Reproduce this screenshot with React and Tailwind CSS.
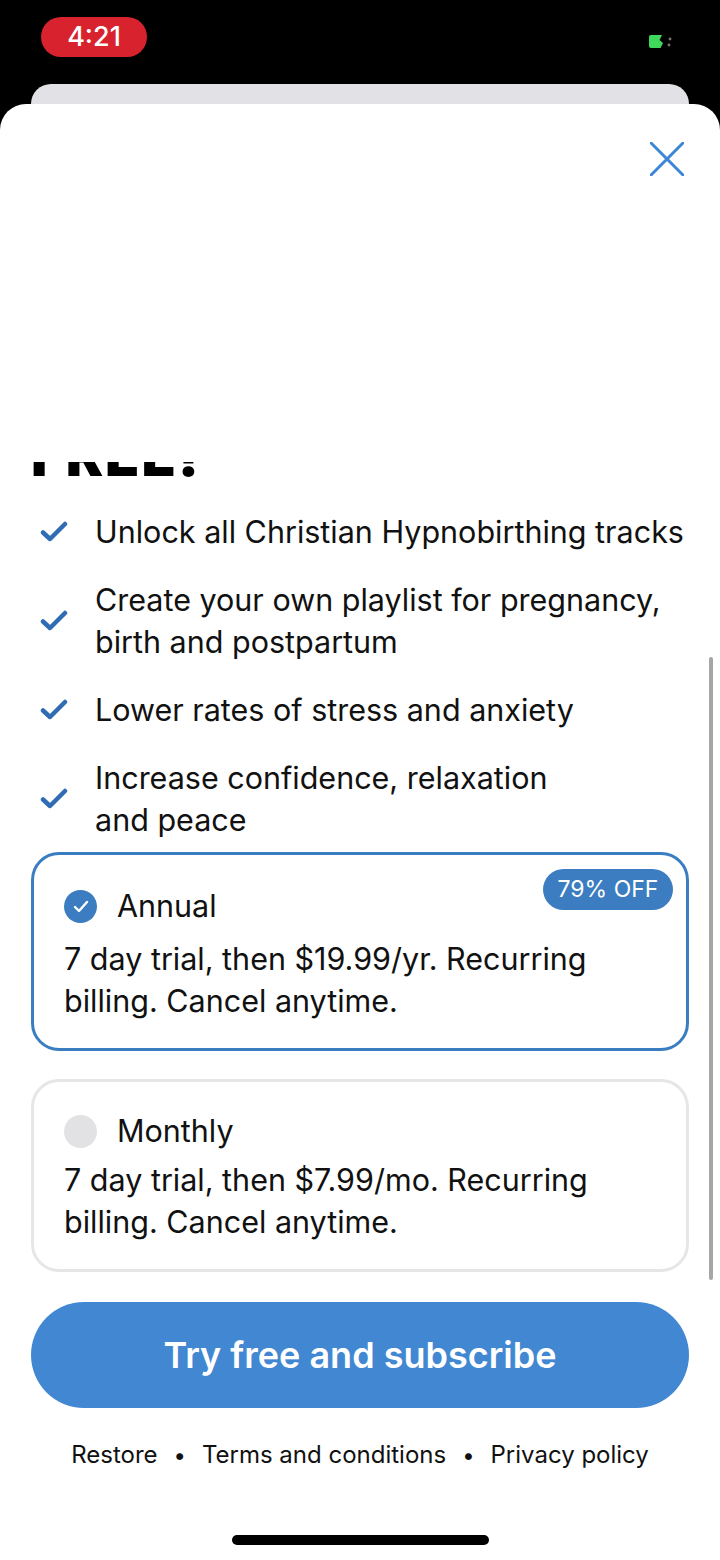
import React from 'react';

const font = { fontFamily: 'Inter, "Noto Sans", sans-serif' };

const features = [
  ['Unlock all Christian Hypnobirthing tracks'],
  ['Create your own playlist for pregnancy, birth and postpartum'],
  ['Lower rates of stress and anxiety'],
  ['Increase confidence, relaxation', 'and peace'],
];

const Check = () => (
  <svg width="28" height="22" viewBox="0 0 28 22" className="shrink-0">
    <path d="M3 11.5 L10 18 L25 3" fill="none" stroke="#2f6cb3" strokeWidth="4.5" strokeLinecap="round" strokeLinejoin="round" />
  </svg>
);

const PlanCard = ({ title, text, selected, badge }) => (
  <div
    className={`relative rounded-[28px] border-[3px] px-[30px] pb-[26px] ${
      selected ? 'border-[#3a7dc0] pt-[30px]' : 'border-[#e6e6e8] pt-[28px]'
    }`}
  >
    {badge && (
      <div className="absolute top-[14px] right-[13px] h-[41px] w-[130px] rounded-full bg-[#3b7dc0] flex items-center justify-center text-[23px] text-white">
        {badge}
      </div>
    )}
    <div className="flex items-center gap-[20px]">
      {selected ? (
        <div className="w-[33px] h-[33px] rounded-full bg-[#3b7dc0] flex items-center justify-center">
          <svg width="16" height="13" viewBox="0 0 16 13">
            <path d="M2 7 L6 11 L14 2" fill="none" stroke="white" strokeWidth="2.4" strokeLinecap="round" strokeLinejoin="round" />
          </svg>
        </div>
      ) : (
        <div className="w-[33px] h-[33px] rounded-full bg-[#e2e2e5]" />
      )}
      <span className="text-[30.5px] leading-[42px] text-[#111]">{title}</span>
    </div>
    <p className={`${selected ? 'mt-[11px]' : 'mt-[7px]'} text-[30.5px] leading-[42px] text-[#111] pr-[20px]`}>{text}</p>
  </div>
);

export default function App() {
  return (
    <div className="w-[720px] h-[1560px] bg-black flex flex-col overflow-hidden" style={font}>
      {/* status bar */}
      <div className="h-[84px] flex items-start justify-between pl-[41px] pr-[44px] pt-[17px]">
        <div className="w-[106px] h-[40px] rounded-full bg-[#d8232f] flex items-center justify-center text-white text-[27px] font-medium">
          4:21
        </div>
        <svg width="28" height="16" viewBox="0 0 28 16" className="mt-[17px]">
          <path d="M1 3 Q1 1 3 1 H14 L11.5 6 L15 9 L12.5 14 H3 Q1 14 1 12 Z" fill="#3fd85a" />
          <circle cx="22" cy="5" r="1.4" fill="#777" />
          <circle cx="21" cy="11" r="1.4" fill="#777" />
        </svg>
      </div>
      <div className="mx-[31px] h-[20px] bg-[#e2e2e6] rounded-t-[22px]" />

      {/* sheet */}
      <div className="flex-1 bg-white rounded-t-[26px] flex flex-col">
        <div className="h-[358px] flex justify-end pt-[38px] pr-[36px]">
          <svg width="34" height="34" viewBox="0 0 34 34">
            <path d="M1 1 L33 33 M33 1 L1 33" stroke="#3b87d6" strokeWidth="3" strokeLinecap="round" />
          </svg>
        </div>

        <div className="relative h-[823px] overflow-hidden">
          <div className="-mt-[34px] px-[31px]">
            <h1 className="text-[56px] leading-[56px] font-black tracking-[2px] text-black">FREE!</h1>

            <ul className="mt-[27px] flex flex-col gap-[26px] pl-[9px]">
              {features.map((f) => (
                <li key={f[0]} className="flex items-center gap-[27px]">
                  <Check />
                  <span className="w-[597px] shrink-0 text-[30.5px] leading-[42px] text-[#111]">
                    {f[0]}
                    {f[1] && (
                      <>
                        <br />
                        {f[1]}
                      </>
                    )}
                  </span>
                </li>
              ))}
            </ul>

            <div className="mt-[11px] flex flex-col gap-[28px]">
              <PlanCard
                title="Annual"
                text="7 day trial, then $19.99/yr. Recurring billing. Cancel anytime."
                selected
                badge="79% OFF"
              />
              <PlanCard
                title="Monthly"
                text="7 day trial, then $7.99/mo. Recurring billing. Cancel anytime."
              />
            </div>
          </div>
          <div className="absolute right-[7px] top-[195px] w-[4px] h-[623px] rounded-full bg-[#a6a6a6]" />
        </div>

        <button className="mx-[31px] mt-[17px] h-[106px] rounded-full bg-[#4287d1] text-white text-[36px] font-semibold">
          Try free and subscribe
        </button>

        <div className="mt-[29px] flex items-center justify-center gap-[16px] text-[24px] text-[#111]">
          <span>Restore</span>
          <span className="text-[22px]">•</span>
          <span>Terms and conditions</span>
          <span className="text-[22px]">•</span>
          <span>Privacy policy</span>
        </div>

        <div className="mt-auto mb-[15px] mx-auto w-[257px] h-[10px] rounded-full bg-black" />
      </div>
    </div>
  );
}
